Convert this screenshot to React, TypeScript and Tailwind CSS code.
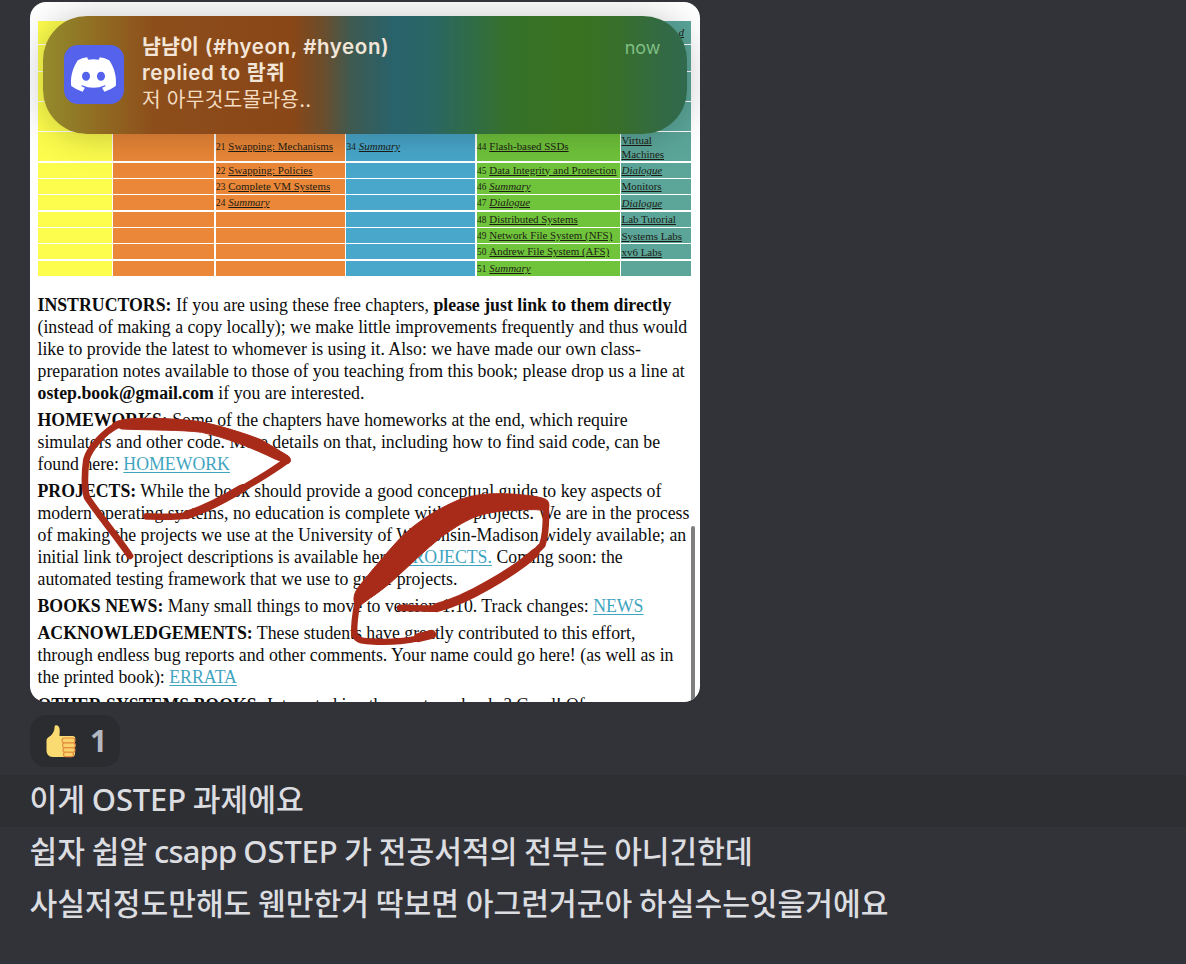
import React from "react";
import { FaDiscord } from "react-icons/fa";

type Cell = { n?: string; t: string; i?: boolean; end?: boolean } | null;

const rows: { h: string; cells: Cell[] }[] = [
  { h: "h-[23px]", cells: [null, null, null, null, null, { t: "d", i: true, end: true }] },
  { h: "h-[25.5px]", cells: [null, null, null, null, null, null] },
  { h: "h-[28.5px]", cells: [null, null, null, null, null, null] },
  { h: "h-[28.5px]", cells: [null, null, null, null, null, null] },
  { h: "h-[29px]", cells: [null, null, { n: "21", t: "Swapping: Mechanisms" }, { n: "34", t: "Summary", i: true }, { n: "44", t: "Flash-based SSDs" }, { t: "Virtual Machines" }] },
  { h: "h-[14.9px]", cells: [null, null, { n: "22", t: "Swapping: Policies" }, null, { n: "45", t: "Data Integrity and Protection" }, { t: "Dialogue", i: true }] },
  { h: "h-[14.9px]", cells: [null, null, { n: "23", t: "Complete VM Systems" }, null, { n: "46", t: "Summary", i: true }, { t: "Monitors" }] },
  { h: "h-[14.9px]", cells: [null, null, { n: "24", t: "Summary", i: true }, null, { n: "47", t: "Dialogue", i: true }, { t: "Dialogue", i: true }] },
  { h: "h-[14.9px]", cells: [null, null, null, null, { n: "48", t: "Distributed Systems" }, { t: "Lab Tutorial" }] },
  { h: "h-[14.9px]", cells: [null, null, null, null, { n: "49", t: "Network File System (NFS)" }, { t: "Systems Labs" }] },
  { h: "h-[14.9px]", cells: [null, null, null, null, { n: "50", t: "Andrew File System (AFS)" }, { t: "xv6 Labs" }] },
  { h: "h-[14.9px]", cells: [null, null, null, null, { n: "51", t: "Summary", i: true }, null] },
];

const columnColors = ["bg-[#fdfd4d]", "bg-[#ea8738]", "bg-[#ea8738]", "bg-[#48a7cb]", "bg-[#70c43b]", "bg-[#5ba699]"];

function ChapterTable() {
  return (
    <div className="ml-[8px] flex w-[653px] flex-col gap-[1.5px] pt-[18.5px] font-['Liberation_Serif',serif] text-[10.95px] leading-[14px] text-[#1c1c14]">
      {rows.map((row, r) => (
        <div key={r} className={`grid grid-cols-[73.5px_101px_129px_129px_143px_70px] gap-x-[1.5px] ${row.h}`}>
          {row.cells.map((cell, c) => (
            <div key={c} className={`flex h-full items-center pl-[0.5px] ${columnColors[c]} ${cell?.end ? "justify-end pr-[7px]" : ""}`}>
              {cell && (
                <span className={cell.t === "Virtual Machines" ? "w-[50px]" : "whitespace-nowrap"}>
                  {cell.n && <span className="mr-[3px] text-[9.3px]">{cell.n}</span>}
                  <span className={`underline underline-offset-1 ${cell.i ? "italic" : ""}`}>{cell.t}</span>
                </span>
              )}
            </div>
          ))}
        </div>
      ))}
    </div>
  );
}

function Line({ children }: { children: React.ReactNode }) {
  return <div className="whitespace-nowrap">{children}</div>;
}

function PageLink({ children }: { children: React.ReactNode }) {
  return <span className="text-[#3fa5bf] underline decoration-1 underline-offset-2">{children}</span>;
}

function Article() {
  return (
    <div className="ml-[7.5px] mt-[19.5px] flex flex-col gap-[5.4px] font-['Liberation_Serif',serif] text-[17.78px] leading-[21.9px] text-[#0c0c0c]">
      <section>
        <Line><b>INSTRUCTORS:</b> If you are using these free chapters, <b>please just link to them directly</b></Line>
        <Line>(instead of making a copy locally); we make little improvements frequently and thus would</Line>
        <Line>like to provide the latest to whomever is using it. Also: we have made our own class-</Line>
        <Line>preparation notes available to those of you teaching from this book; please drop us a line at</Line>
        <Line><b>ostep.book@gmail.com</b> if you are interested.</Line>
      </section>
      <section>
        <Line><b>HOMEWORKS:</b> Some of the chapters have homeworks at the end, which require</Line>
        <Line>simulators and other code. More details on that, including how to find said code, can be</Line>
        <Line>found here: <PageLink>HOMEWORK</PageLink></Line>
      </section>
      <section>
        <Line><b>PROJECTS:</b> While the book should provide a good conceptual guide to key aspects of</Line>
        <Line>modern operating systems, no education is complete without projects. We are in the process</Line>
        <Line>of making the projects we use at the University of Wisconsin-Madison widely available; an</Line>
        <Line>initial link to project descriptions is available here: <PageLink>PROJECTS.</PageLink> Coming soon: the</Line>
        <Line>automated testing framework that we use to grade projects.</Line>
      </section>
      <section>
        <Line><b>BOOKS NEWS:</b> Many small things to move to version 1.10. Track changes: <PageLink>NEWS</PageLink></Line>
      </section>
      <section>
        <Line><b>ACKNOWLEDGEMENTS:</b> These students have greatly contributed to this effort,</Line>
        <Line>through endless bug reports and other comments. Your name could go here! (as well as in</Line>
        <Line>the printed book): <PageLink>ERRATA</PageLink></Line>
      </section>
      <section>
        <Line><b>OTHER SYSTEMS BOOKS:</b> Interested in other systems books? Good! Of</Line>
      </section>
    </div>
  );
}

function PenMarks() {
  return (
    <svg className="absolute inset-0" width="670" height="700" viewBox="30 2 670 700" fill="none" stroke="#a82b19" strokeLinecap="round" strokeLinejoin="round">
      <g transform="translate(75 410) scale(0.33333)">
        <path strokeWidth="20" d="M165 438C130 385 60 300 36 262C28 240 28 190 34 150C42 115 90 62 130 44" />
        <path fill="#a82b19" strokeWidth="3" d="M112 42C130 28 160 26 200 25C260 24 320 28 370 34C430 45 510 70 560 90L640 138C650 148 648 158 638 161L600 147C540 117 450 82 380 67C320 59 230 61 140 57Z" />
        <path strokeWidth="20" d="M636 151C590 185 500 240 430 275C390 295 350 315 325 318C290 322 250 320 215 319" />
        <path strokeWidth="25" d="M500 236C460 260 390 298 335 315" />
      </g>
      <g transform="translate(345 485) scale(0.33333)">
        <path fill="#a82b19" strokeWidth="3" d="M28 352C24 335 30 320 42 304C70 270 110 220 165 160C210 115 270 75 340 45C380 30 430 23 500 27C550 31 580 34 600 42C614 48 614 64 608 76C600 78 580 73 560 74C500 74 440 78 390 96C350 112 320 135 290 155C240 195 190 245 140 290C100 325 65 345 48 360Z" />
        <path strokeWidth="20" d="M602 60C604 100 602 150 592 180C560 215 500 260 430 300C370 335 320 358 275 370C240 373 200 367 165 369" />
        <path strokeWidth="27" d="M570 204C530 240 480 272 430 300C370 335 320 356 275 368" />
        <path strokeWidth="19" d="M38 348C32 380 26 420 28 445C32 462 45 468 75 469C120 472 170 470 210 462L262 450" />
        <path strokeWidth="27" d="M220 458L260 448" />
      </g>
    </svg>
  );
}

function Notification() {
  return (
    <div className="absolute left-[13px] top-[13.5px] flex h-[118px] w-[644px] rounded-[44px] bg-[linear-gradient(90deg,#948a2c_0px,#918028_20px,#906420_70px,#8d4e1b_110px,#8b491a_190px,#894717_250px,#6b4d2c_280px,#3e5a50_308px,#29626b_350px,#2a6666_385px,#306c45_430px,#36712b_465px,#39721f_530px,#386f2b_575px,#336a45_620px,#30694d_644px)] pl-[21px] pr-[26.5px] font-['Inter','Noto_Sans_CJK_KR',sans-serif] shadow-[0_2px_36px_rgba(0,0,0,0.24)]">
      <div className="mt-[29px] flex size-[59.5px] shrink-0 items-center justify-center rounded-[14px] bg-[#5563ec]">
        <FaDiscord className="size-[49px] shrink-0 text-white" />
      </div>
      <div className="ml-[18.5px] mt-[18px] flex-1 whitespace-nowrap text-[20.5px] leading-[26.5px] text-[#f3e6d8]">
        <div className="font-semibold tracking-[0.6px]"><span className="tracking-[0.1px]">냠냠이</span> (#hyeon, #hyeon)</div>
        <div className="font-semibold tracking-[0.6px]">replied to <span className="tracking-[0.4px]">람쥐</span></div>
        <div className="text-[20.3px] tracking-[0.25px] text-[#f3dcc0]">저 아무것도몰라용..</div>
      </div>
      <div className="mt-[19px] text-[18px] leading-[26px] text-[#80bf83]">now</div>
    </div>
  );
}

function ThumbsUp() {
  return (
    <svg width="32" height="34" viewBox="0 0 32 34">
      <path fill="#fadb72" d="M1.5 17C1.500 14 4 13 6 11.500C8.500 9 9.500 6 9.500 3.500C9.500 1.500 10.500 1 11.800 1.200C14 1.600 14.800 4 14.700 7L14.500 12H27C29.500 12 31 13 30 16V29C30 32 28.500 33 26.500 33H8C3.500 33 1.500 30 1.500 26Z" />
      <g fill="#f9d26a" stroke="#e58b40" strokeWidth="1.100">
        <rect x="17" y="14" width="13" height="5" rx="2.500" />
        <rect x="17.500" y="18.900" width="12.800" height="4.800" rx="2.400" />
        <rect x="18" y="23.600" width="12" height="4.700" rx="2.350" />
        <rect x="18.500" y="28.200" width="10" height="4.400" rx="2.200" />
      </g>
    </svg>
  );
}

function Latin({ children, tight }: { children: React.ReactNode; tight?: boolean }) {
  return <span className={`font-['Noto_Sans'] text-[31px] ${tight ? "tracking-[-0.8px]" : "tracking-[-0.15px]"}`}>{children}</span>;
}

function Message({ children, active }: { children: React.ReactNode; active?: boolean }) {
  return (
    <div className={`h-[52px] whitespace-nowrap pl-[29.5px] font-['Noto_Sans_CJK_KR',sans-serif] text-[30.15px] font-medium leading-[46px] text-[#dcdde1] ${active ? "bg-[#2e2f33]" : ""}`}>
      {children}
    </div>
  );
}

export default function App() {
  return (
    <main className="h-[964px] w-[1186px] overflow-hidden bg-[#323338] pt-[2px]">
      <div className="relative ml-[30px] h-[700px] w-[670px] overflow-hidden rounded-[16px] bg-white">
        <ChapterTable />
        <Article />
        <PenMarks />
        <div className="absolute left-[661px] top-[524px] h-[180px] w-[4px] rounded-t-full bg-[#7f7f7f]" />
        <Notification />
      </div>
      <div className="ml-[30px] mt-[13px] flex h-[52px] w-[90px] items-center rounded-[16px] bg-[#2b2c30] pl-[15px]">
        <ThumbsUp />
        <span className="ml-[13px] font-['Noto_Sans'] text-[30px] font-bold leading-none text-[#b5b7c0]">1</span>
      </div>
      <div className="mt-[8px]">
        <Message active>이게 <Latin>OSTEP</Latin> 과제에요</Message>
        <Message>쉽자 쉽알 <Latin tight>csapp</Latin> <Latin>OSTEP</Latin> 가 전공서적의 전부는 아니긴한데</Message>
        <Message>사실저정도만해도 웬만한거 딱보면 아그런거군아 하실수는잇을거에요</Message>
      </div>
    </main>
  );
}
